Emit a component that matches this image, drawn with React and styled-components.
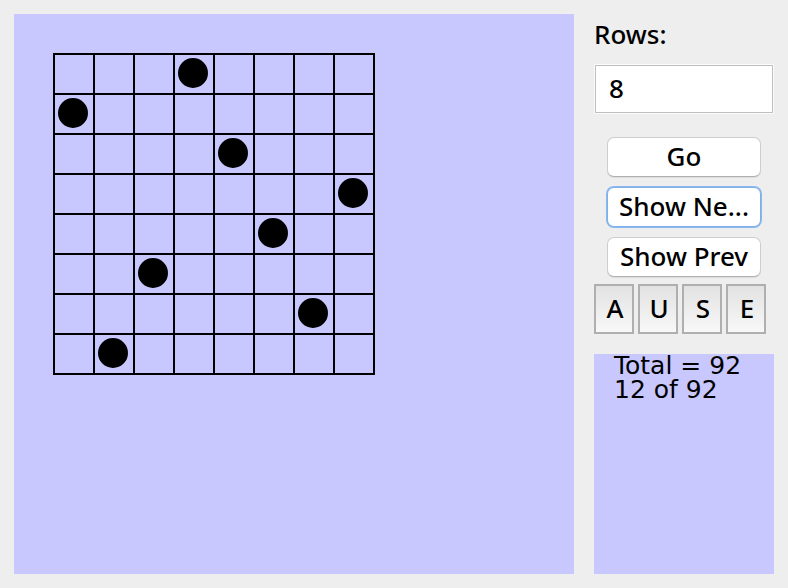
import React, { useState } from "react";
import styled, { createGlobalStyle } from "styled-components";

const GlobalStyle = createGlobalStyle`
  *, *::before, *::after { box-sizing: border-box; }
  body {
    margin: 0;
    background: #eeeeee;
    color: #000;
    font-family: "Noto Sans", "Open Sans", sans-serif;
    font-size: 26px;
    font-weight: 500;
    line-height: 32px;
  }
`;

const Window = styled.main`
  display: flex;
  gap: 20px;
  min-height: 100vh;
  padding: 14px;
`;

const Canvas = styled.section`
  flex: 1;
  min-width: 0;
  padding: 39px;
  background: #c8c8ff;
`;

const Board = styled.div`
  display: grid;
  grid-template-columns: repeat(${(p) => p.$size}, 38px);
  grid-auto-rows: 38px;
  gap: 2px;
  width: max-content;
  padding: 2px;
  background: #000;
`;

const Cell = styled.div`
  padding: 3px;
  background: #c8c8ff;
`;

const Queen = styled.div`
  width: 30px;
  height: 30px;
  border-radius: 50%;
  background: #000;
`;

const Sidebar = styled.aside`
  display: flex;
  flex-direction: column;
  flex: 0 0 180px;
`;

const Label = styled.label`
  padding: 4px 0 14px;
`;

const TextField = styled.input`
  width: 100%;
  height: 50px;
  padding: 0 14px 2px;
  border: 1px solid #fbfbfb;
  outline: 1px solid #bebebe;
  outline-offset: -2px;
  background: #fff;
  color: inherit;
  font: inherit;
`;

const Actions = styled.div`
  display: flex;
  flex-direction: column;
  gap: 10px;
  padding: 23px 13px 7px;
`;

const ActionButton = styled.button`
  height: 40px;
  padding: 0 8px 2px;
  border: 1px solid ${(p) => (p.$focused ? "#7fb0ea" : "#cdcdcd")};
  border-bottom-color: ${(p) => (p.$focused ? "#7fb0ea" : "#b0b0b0")};
  border-radius: 7px;
  background: #fff;
  box-shadow: ${(p) => (p.$focused ? "0 0 0 1px #8ab8ee" : "0 1px 0 #dcdcdc")};
  color: inherit;
  font: inherit;
  white-space: nowrap;
`;

const ModeRow = styled.div`
  display: flex;
  gap: 4px;
`;

const ModeButton = styled.button`
  width: 40px;
  height: 50px;
  padding: 0 0 2px 2px;
  border: 2px solid #afafaf;
  background: linear-gradient(#e2e2e2, #f8f8f8);
  color: inherit;
  font: inherit;
`;

const Status = styled.output`
  flex: 1;
  margin-top: 20px;
  padding: 0 20px;
  background: #c8c8ff;
  font-family: "DejaVu Sans", sans-serif;
  font-size: 25px;
  font-weight: 400;
  line-height: 24px;
  white-space: pre-line;
`;

const queens = [3, 0, 4, 7, 5, 2, 6, 1];
const modes = ["A", "U", "S", "E"];

export default function App() {
  const [rows, setRows] = useState("8");
  return (
    <>
      <GlobalStyle />
      <Window>
        <Canvas>
          <Board $size={queens.length}>
            {queens.flatMap((queen, row) =>
              queens.map((_, col) => (
                <Cell key={`${row}-${col}`}>{queen === col && <Queen />}</Cell>
              ))
            )}
          </Board>
        </Canvas>
        <Sidebar>
          <Label htmlFor="rows">Rows:</Label>
          <TextField id="rows" value={rows} onChange={(e) => setRows(e.target.value)} />
          <Actions>
            <ActionButton type="button">Go</ActionButton>
            <ActionButton type="button" $focused>Show Ne...</ActionButton>
            <ActionButton type="button">Show Prev</ActionButton>
          </Actions>
          <ModeRow>
            {modes.map((mode) => (
              <ModeButton key={mode} type="button">{mode}</ModeButton>
            ))}
          </ModeRow>
          <Status>{"Total = 92\n12 of 92"}</Status>
        </Sidebar>
      </Window>
    </>
  );
}
